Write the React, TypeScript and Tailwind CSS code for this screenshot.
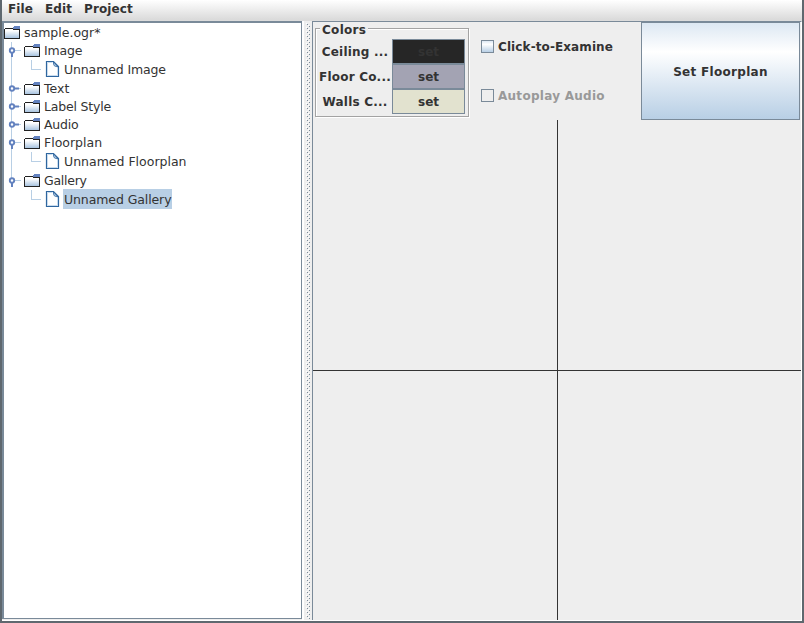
import React from "react";

type Kind = "root" | "open" | "closed" | "leaf";
interface Row {
  label: string;
  kind: Kind;
  tracking?: string;
  last?: boolean;
  selected?: boolean;
}

const rows: Row[] = [
  { label: "sample.ogr*", kind: "root" },
  { label: "Image", kind: "open", tracking: "tracking-[-0.2px]" },
  { label: "Unnamed Image", kind: "leaf", tracking: "tracking-[-0.13px]" },
  { label: "Text", kind: "closed" },
  { label: "Label Style", kind: "closed", tracking: "tracking-[-0.2px]" },
  { label: "Audio", kind: "closed", tracking: "tracking-[-0.2px]" },
  { label: "Floorplan", kind: "open" },
  { label: "Unnamed Floorplan", kind: "leaf" },
  { label: "Gallery", kind: "open", tracking: "tracking-[-0.25px]", last: true },
  { label: "Unnamed Gallery", kind: "leaf", tracking: "tracking-[-0.1px]", last: true, selected: true },
];

function Folder() {
  return (
    <svg width="16" height="18" viewBox="0 0 16 18" shapeRendering="crispEdges" className="shrink-0">
      <defs>
        <linearGradient id="folder" x1="0" y1="0" x2="0" y2="1">
          <stop offset="0.2" stopColor="#fff" />
          <stop offset="1" stopColor="#a9c4e0" />
        </linearGradient>
      </defs>
      <path d="M1 5h14v9H1z" fill="url(#folder)" />
      <path d="M0 5h1v10H0zM1 4h8v1H1zM1 14h15v1H1zM15 5h1v10h-1zM9 5h6v1H9z" fill="#222" />
      <path d="M10 2h6v1h-6zM9 3h7v2H9z" fill="#6382bf" />
    </svg>
  );
}

function FileIcon() {
  return (
    <svg width="16" height="20" viewBox="0 0 16 20" className="shrink-0">
      <path d="M2.500 2.500h7l5 5v10h-12z" fill="#fff" stroke="#2f669f" strokeWidth="1.200" />
      <path d="M3.500 16.500v-13h5M13.500 9v7.500h-10" fill="none" stroke="#c9dcee" />
      <path d="M9.500 3v2l1 2 3.500 1z" fill="#b8cfe5" stroke="#2f669f" strokeWidth="0.8" />
    </svg>
  );
}

function Branch({ kind, last }: { kind: Kind; last?: boolean }) {
  if (kind === "leaf")
    return (
      <svg width="40" height="20" viewBox="0 0 40 20" shapeRendering="crispEdges" className="shrink-0">
        {!last && <path d="M7 0h1v20H7z" fill="#b8cfe5" />}
        <path d="M27 0h1v9h9v1H27z" fill="#b8cfe5" />
      </svg>
    );
  return (
    <svg width="20" height="18" viewBox="0 0 20 18" className="shrink-0">
      <path d={last ? "M7 0h1v9H7z" : "M7 0h1v18H7z"} fill="#b8cfe5" />
      <path d="M8 8h9v1H8z" fill="#b8cfe5" />
      {kind === "open" ? (
        <path d="M7 11h2v4H7z" fill="#6382bf" />
      ) : (
        <path d="M10 7.500h5v2h-5z" fill="#6382bf" />
      )}
      <circle cx="8" cy="8.500" r="2.200" fill="#fff" stroke="#6382bf" strokeWidth="1.900" />
    </svg>
  );
}

function Tree() {
  return (
    <div className="h-[598px] w-[300px] shrink-0 border-t-2 border-r border-b border-l-2 border-[#7a8a99] bg-white pt-px">
      {rows.map((r) => {
        const leaf = r.kind === "leaf";
        return (
          <div key={r.label} className={leaf ? "flex h-5 items-start" : "flex h-[18px] items-start"}>
            {r.kind !== "root" && <Branch kind={r.kind} last={r.last} />}
            <div className={leaf ? "-mt-px flex" : "flex"}>
              {leaf ? <FileIcon /> : <Folder />}
              <span
                className={`ml-[3px] px-px whitespace-pre ${leaf ? "h-5 leading-[22px]" : r.kind === "open" ? "leading-[18px]" : "leading-[17px]"} ${r.tracking ?? ""} ${r.selected ? "bg-[#b8cfe5]" : ""}`}
              >
                {r.label}
              </span>
            </div>
          </div>
        );
      })}
    </div>
  );
}

function Divider() {
  return (
    <svg width="10" height="599" className="shrink-0" shapeRendering="crispEdges">
      <defs>
        <pattern id="bumps" width="4" height="4" patternUnits="userSpaceOnUse" x="4" y="2">
          <path d="M0 0h1v1H0zM2 2h1v1H2z" fill="#fff" />
          <path d="M1 1h1v1H1zM3 3h1v1H3z" fill="#7a8a99" />
        </pattern>
      </defs>
      <rect width="10" height="599" fill="#eee" />
      <rect width="2" height="599" fill="#fff" />
      <rect x="4" y="2" width="4" height="596" fill="url(#bumps)" />
    </svg>
  );
}

function ColorRow({ label, tone }: { label: string; tone: string }) {
  return (
    <div className="flex h-[25px] items-center">
      <span className="w-[77px] pl-[3px] text-center tracking-[0.2px] whitespace-pre">{label}</span>
      <button className={`h-[25px] w-[73px] shrink-0 border border-[#7a8a99] text-center ${tone}`}>set</button>
    </div>
  );
}

function Check({ label, disabled }: { label: string; disabled?: boolean }) {
  return (
    <label className={`flex h-[49px] items-center ${disabled ? "tracking-[0.27px] text-[#999]" : "tracking-[0.1px]"}`}>
      <span
        className={`mr-1 h-[13px] w-[13px] border border-[#7a8a99] ${disabled ? "" : "bg-linear-to-b from-[#dde8f3] via-white via-30% to-[#b8cfe5]"}`}
      />
      <span className="whitespace-pre">{label}</span>
    </label>
  );
}

export default function App() {
  return (
    <div className="flex h-[623px] w-[804px] flex-col overflow-hidden border-x-2 border-b-2 border-[#5f686f] bg-[#eee] font-['DejaVu_Sans','Verdana',sans-serif] text-[12.5px] text-[#333]">
      <nav className="flex h-[21px] shrink-0 gap-3 border-b border-[#dcdcdc] bg-linear-to-b from-white to-[#dadada] pl-[6px] text-[12px] leading-[19px] font-bold tracking-[0.1px]">
        <span>File</span>
        <span>Edit</span>
        <span>Project</span>
      </nav>
      <div className="flex h-[600px] border-b border-white">
        <Tree />
        <Divider />
        <main className="flex h-[599px] w-[490px] shrink-0 flex-col border-t border-r border-l border-[#7a8a99] border-r-white text-[12px] font-bold">
          <div className="flex h-[98px] shrink-0">
            <fieldset className="relative mt-[6px] ml-[2px] h-[89px] w-[154px] shrink-0 border border-[#a3a3a3] pt-[10px] shadow-[1px_1px_0_#fff,inset_1px_1px_0_#fff]">
              <span className="absolute -top-[6px] left-[4px] bg-[#eee] px-[2px] leading-[14px] tracking-[0.3px]">Colors</span>
              <div className="-ml-px">
                <ColorRow label="Ceiling ..." tone="bg-[#262626]" />
                <ColorRow label="Floor Co..." tone="bg-[#a3a3b3]" />
                <ColorRow label="Walls C..." tone="bg-[#e2e2cf]" />
              </div>
            </fieldset>
            <div className="ml-3 w-[160px] shrink-0">
              <Check label="Click-to-Examine" />
              <Check label="Autoplay Audio" disabled />
            </div>
            <button className="h-[98px] w-[159px] shrink-0 border border-[#7a8a99] bg-linear-to-b from-[#dde8f3] via-white via-30% to-[#b8cfe5] pt-px tracking-[0.3px]">
              Set Floorplan
            </button>
          </div>
          <div className="grid flex-1 grid-cols-[245px_1fr] grid-rows-[251px_1fr]">
            <div className="border-r border-b border-[#333]" />
            <div className="border-b border-[#333]" />
            <div className="border-r border-[#333]" />
            <div />
          </div>
        </main>
      </div>
    </div>
  );
}
